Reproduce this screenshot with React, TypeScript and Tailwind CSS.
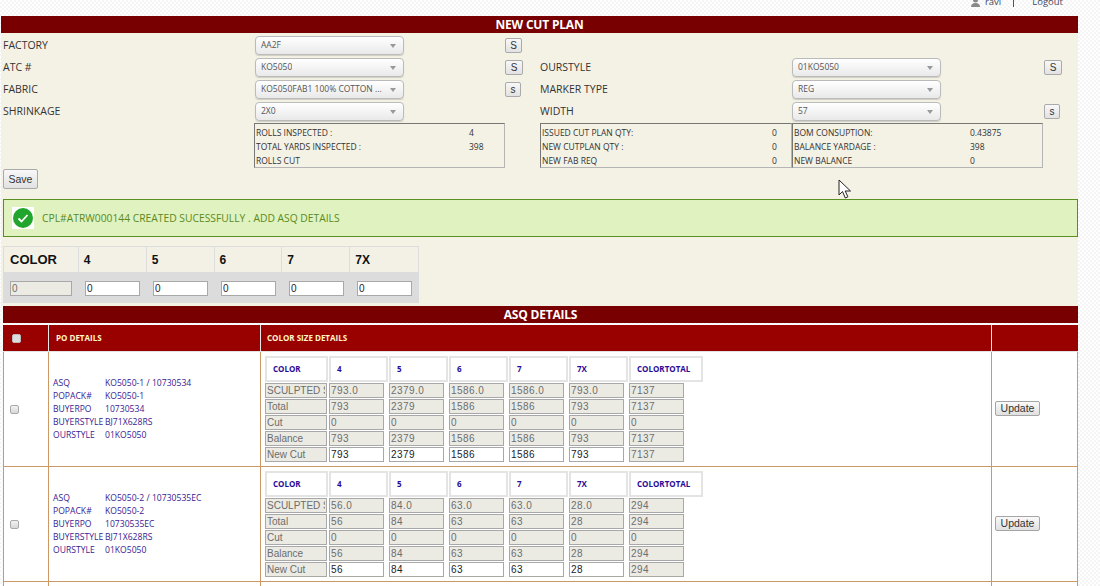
import React from "react";

const sans = "font-['Open_Sans','Liberation_Sans',sans-serif]";
const arial = "font-['Liberation_Sans',Arial,sans-serif]";

function Sel({ text }: { text: string }) {
  return (
    <div className="w-[149px] h-[19px] shrink-0 flex items-center justify-between pl-[5px] pr-[7px] rounded-[4px] border border-[#bbbbbb] bg-linear-to-b from-white to-[#e9e9e9] shadow-[0_1px_1px_rgba(0,0,0,0.15)] text-[8.5px] text-[#555555]">
      <span className="truncate">{text}</span>
      <span className="w-0 h-0 shrink-0 border-x-[3.5px] border-x-transparent border-t-[4px] border-t-[#999999]" />
    </div>
  );
}

function SBtn({ t, w = 17 }: { t: string; w?: number }) {
  return (
    <button
      style={{ width: w }}
      className={`h-[15px] shrink-0 flex items-center justify-center border border-[#aaaaaa] rounded-[2px] bg-linear-to-b from-[#f8f8f8] to-[#e2e2e2] text-[10px] text-[#333333] ${arial}`}
    >
      {t}
    </button>
  );
}

function Info({ w, col, rows, ml = 0 }: { w: number; col: number; rows: [string, string][]; ml?: number }) {
  return (
    <div
      style={{ width: w, marginLeft: ml }}
      className="h-[45px] shrink-0 border border-t-[#777777] border-l-[#777777] border-r-[#b5b5b5] border-b-[#b5b5b5] pl-[1px] pt-[2px] text-[8.5px] text-[#333333]"
    >
      {rows.map(([a, b]) => (
        <div key={a} className="h-[14px] leading-[14px] flex">
          <span style={{ width: col }} className="shrink-0 whitespace-nowrap">{a}</span>
          <span>{b}</span>
        </div>
      ))}
    </div>
  );
}

function Bar({ t }: { t: string }) {
  return (
    <div className="h-[17px] bg-[#780000] text-white text-[12px] font-bold leading-[17px] text-center tracking-[-0.2px]">{t}</div>
  );
}

const sizes = ["4", "5", "6", "7", "7X"];

function Field({ v, w = 55, white = false }: { v: string; w?: number; white?: boolean }) {
  const numeric = /^[0-9.]+$/.test(v);
  return (
    <input
      readOnly
      value={v}
      style={{ width: w }}
      className={`h-[15px] shrink-0 border border-[#a8a8a8] px-[1px] text-[10px] leading-[13px] outline-none ${arial} ${numeric ? "tracking-[0.45px]" : "tracking-normal"} ${white ? "bg-white text-[#222222]" : "bg-[#ebebe4] text-[#6d6d6d]"}`}
    />
  );
}

function SizeHead({ t, w }: { t: string; w: number }) {
  return (
    <div style={{ width: w }} className="h-[26px] shrink-0 border-2 border-[#e4e4e4] bg-white flex items-center pl-[6px] text-[8px] font-bold text-[#2a0a96]">
      {t}
    </div>
  );
}

type Row = {
  asq: string; pack: string; po: string;
  lines: { label: string; vals: string[]; total: string; white?: boolean }[];
};

const rows: Row[] = [
  {
    asq: "KO5050-1 / 10730534", pack: "KO5050-1", po: "10730534",
    lines: [
      { label: "SCULPTED SHORT", vals: ["793.0", "2379.0", "1586.0", "1586.0", "793.0"], total: "7137" },
      { label: "Total", vals: ["793", "2379", "1586", "1586", "793"], total: "7137" },
      { label: "Cut", vals: ["0", "0", "0", "0", "0"], total: "0" },
      { label: "Balance", vals: ["793", "2379", "1586", "1586", "793"], total: "7137" },
      { label: "New Cut", vals: ["793", "2379", "1586", "1586", "793"], total: "7137", white: true },
    ],
  },
  {
    asq: "KO5050-2 / 10730535EC", pack: "KO5050-2", po: "10730535EC",
    lines: [
      { label: "SCULPTED SHORT", vals: ["56.0", "84.0", "63.0", "63.0", "28.0"], total: "294" },
      { label: "Total", vals: ["56", "84", "63", "63", "28"], total: "294" },
      { label: "Cut", vals: ["0", "0", "0", "0", "0"], total: "0" },
      { label: "Balance", vals: ["56", "84", "63", "63", "28"], total: "294" },
      { label: "New Cut", vals: ["56", "84", "63", "63", "28"], total: "294", white: true },
    ],
  },
];

function PoLine({ a, b }: { a: string; b: string }) {
  return (
    <div className="h-[13px] leading-[13px] flex whitespace-nowrap">
      <span className="w-[52px] shrink-0 text-[#3a1a90]">{a}</span>
      <span className="text-[#3a1a90]">{b}</span>
    </div>
  );
}

function DataRow({ r }: { r: Row }) {
  return (
    <div className="h-[115px] flex border-b border-[#cc9966] bg-white">
      <div className="w-[46px] shrink-0 border-l border-r border-[#cc9966] flex items-center pl-[6px]">
        <span className="w-[9px] h-[9px] rounded-[2px] border border-[#aaaaaa] bg-linear-to-b from-[#f2f2f2] to-[#d8d8d8]" />
      </div>
      <div className="w-[212px] shrink-0 border-r border-[#cc9966] flex flex-col justify-center pl-[4px] text-[8.6px]">
        <PoLine a="ASQ" b={r.asq} />
        <PoLine a="POPACK#" b={r.pack} />
        <PoLine a="BUYERPO" b={r.po} />
        <PoLine a="BUYERSTYLE" b="BJ71X628RS" />
        <PoLine a="OURSTYLE" b="01KO5050" />
      </div>
      <div className="w-[731px] shrink-0 border-r border-[#cc9966] pt-[4px] pl-[4px]">
        <div className="flex gap-[1px]">
          <SizeHead t="COLOR" w={63} />
          {sizes.map((s) => <SizeHead key={s} t={s} w={59} />)}
          <SizeHead t="COLORTOTAL" w={74} />
        </div>
        <div className="mt-[1px] flex flex-col gap-[1px]">
          {r.lines.map((l) => (
            <div key={l.label} className="flex">
              <Field v={l.label} w={62} />
              <div className="ml-[2px] flex gap-[5px]">
                {l.vals.map((v, i) => <Field key={i} v={v} white={l.white} />)}
                <Field v={l.total} />
              </div>
            </div>
          ))}
        </div>
      </div>
      <div className="w-[86px] shrink-0 border-r border-[#cc9966] flex items-center pl-[3px] pb-[2px]">
        <button className={`w-[45px] h-[15px] border border-[#a5a5a5] rounded-[2px] bg-linear-to-b from-[#fafafa] to-[#e0e0e0] text-[10.5px] leading-[13px] text-[#333333] ${arial}`}>Update</button>
      </div>
    </div>
  );
}

export default function App() {
  return (
    <div className={`relative w-[1100px] h-[586px] overflow-hidden bg-[repeating-conic-gradient(#f5f5f5_0_25%,#ffffff_0_50%)] bg-[length:4px_4px] ${sans}`}>
      <div className="h-[16px] w-[1078px] overflow-hidden flex justify-end text-[9.5px] leading-none text-[#444a5c]">
        <div className="flex items-start -mt-[3px] pr-[15px]">
          <svg width="9" height="10" viewBox="0 0 9 10" className="mr-[4px]" fill="#888888">
            <circle cx="4.5" cy="3" r="2.5" />
            <path d="M0 10c0-3 2-4 4.500-4s4.500 1 4.500 4z" />
          </svg>
          <span className="ml-[1px]">ravi</span>
          <span className="ml-[12px] mr-[18px] w-px h-[10px] bg-[#555555]" />
          <span>Logout</span>
        </div>
      </div>

      <div className="w-[1077px] ml-[1px] bg-[#f4f1e5] h-[290px]">
        <Bar t="NEW CUT PLAN" />
        <div className="h-[3px]" />
        <div className="pl-[2px] flex flex-col gap-[3px] text-[10.5px] text-[#333333]">
          <div className="h-[19px] flex items-center">
            <span className="w-[252px]">FACTORY</span>
            <Sel text="AA2F" />
            <div className="ml-[101px]"><SBtn t="S" /></div>
          </div>
          <div className="h-[19px] flex items-center">
            <span className="w-[252px]">ATC #</span>
            <Sel text="KO5050" />
            <div className="ml-[101px]"><SBtn t="S" w={18} /></div>
            <span className="ml-[17px] w-[252px]">OURSTYLE</span>
            <Sel text="01KO5050" />
            <div className="ml-[103px]"><SBtn t="S" w={18} /></div>
          </div>
          <div className="h-[19px] flex items-center">
            <span className="w-[252px]">FABRIC</span>
            <Sel text="KO5050FAB1 100% COTTON ..." />
            <div className="ml-[101px]"><SBtn t="s" w={16} /></div>
            <span className="ml-[19px] w-[252px]">MARKER TYPE</span>
            <Sel text="REG" />
          </div>
          <div className="h-[19px] flex items-center">
            <span className="w-[252px]">SHRINKAGE</span>
            <Sel text="2X0" />
            <span className="ml-[136px] w-[252px]">WIDTH</span>
            <Sel text="57" />
            <div className="ml-[103px]"><SBtn t="s" w={16} /></div>
          </div>
        </div>
        <div className="flex pl-[253px] mt-[2px]">
          <Info w={251} col={213} rows={[["ROLLS INSPECTED :", "4"], ["TOTAL YARDS INSPECTED :", "398"], ["ROLLS CUT", ""]]} />
          <Info w={252} col={230} ml={35} rows={[["ISSUED CUT PLAN QTY:", "0"], ["NEW CUTPLAN QTY :", "0"], ["NEW FAB REQ", "0"]]} />
          <Info w={251} col={176} rows={[["BOM CONSUPTION:", "0.43875"], ["BALANCE YARDAGE :", "398"], ["NEW BALANCE", "0"]]} />
        </div>
        <button className={`ml-[2px] mt-[1px] block w-[35px] h-[20px] pt-[1px] border border-[#aaaaaa] rounded-[2px] bg-linear-to-b from-[#f8f8f8] to-[#e2e2e2] text-[10.5px] text-[#333333] ${arial}`}>Save</button>

        <div className="ml-[2px] mt-[10px] h-[38px] border border-[#5b8f22] bg-[#dff2bf] flex items-center pl-[8px] text-[10.3px] text-[#5b8a1e]">
          <span className="w-[22px] h-[22px] bg-white flex items-center justify-center mr-[8px]">
            <svg width="20" height="20" viewBox="0 0 20 20">
              <circle cx="10" cy="10" r="10" fill="#22a52c" />
              <path d="M5.500 10.500l3 3 6-6.500" fill="none" stroke="#ffffff" strokeWidth="1.800" />
            </svg>
          </span>
          <span className="mt-[1px]">CPL#ATRW000144 CREATED SUCESSFULLY . ADD ASQ DETAILS</span>
        </div>

        <div className={`ml-[2px] mt-[9px] w-[416px] ${arial}`}>
          <div className="h-[27px] flex bg-[#f3f1e5] border border-[#dddddd] text-[12px] font-bold text-[#111111]">
            <div className="w-[75px] border-r border-[#dddddd] flex items-center pl-[6px] text-[13px] font-bold">COLOR</div>
            {sizes.map((s) => (
              <div key={s} className="w-[68px] border-r last:border-r-0 border-[#dddddd] flex items-center pl-[5px]">{s}</div>
            ))}
          </div>
          <div className="h-[30px] bg-[#dcdcdc] flex items-center pl-[7px]">
            <Field v="0" w={62} />
            <div className="ml-[13px] flex gap-[13px]">
              {sizes.map((s) => <Field key={s} v="0" white />)}
            </div>
          </div>
        </div>
      </div>

      <div className="ml-[3px] w-[1075px]">
        <Bar t="ASQ DETAILS" />
      </div>
      <div className="ml-[3px] mt-[2px] w-[1075px] h-[27px] flex bg-[#990000] text-[#fff6c8] text-[8px] font-bold border-b border-[#e4e4e4]">
        <div className="w-[46px] shrink-0 border-r border-[#e8e8e8] flex items-center pl-[9px]">
          <span className="w-[9px] h-[9px] rounded-[2px] border border-[#bbbbbb] bg-[#dddddd]" />
        </div>
        <div className="w-[212px] shrink-0 border-r border-[#e8e8e8] flex items-center pl-[7px]">PO DETAILS</div>
        <div className="w-[731px] shrink-0 border-r border-[#e8e8e8] flex items-center pl-[6px]">COLOR SIZE DETAILS</div>
        <div className="w-[85px] shrink-0" />
      </div>
      <div className="ml-[3px] w-[1075px]">
        {rows.map((r) => <DataRow key={r.asq} r={r} />)}
        <div className="h-[10px] flex bg-white">
          <div className="w-[46px] shrink-0 border-l border-r border-[#cc9966]" />
          <div className="w-[212px] shrink-0 border-r border-[#cc9966]" />
          <div className="w-[731px] shrink-0 border-r border-[#cc9966]" />
          <div className="w-[86px] shrink-0 border-r border-[#cc9966]" />
        </div>
      </div>

      <svg width="14" height="21" viewBox="0 0 14 21" className="absolute left-[838px] top-[179px]">
        <path d="M1 1v15l3.500-3.500 2.800 6.500 2.600-1.200-2.700-5.800h5.300z" fill="#ffffff" stroke="#222222" strokeWidth="1" />
      </svg>
    </div>
  );
}
